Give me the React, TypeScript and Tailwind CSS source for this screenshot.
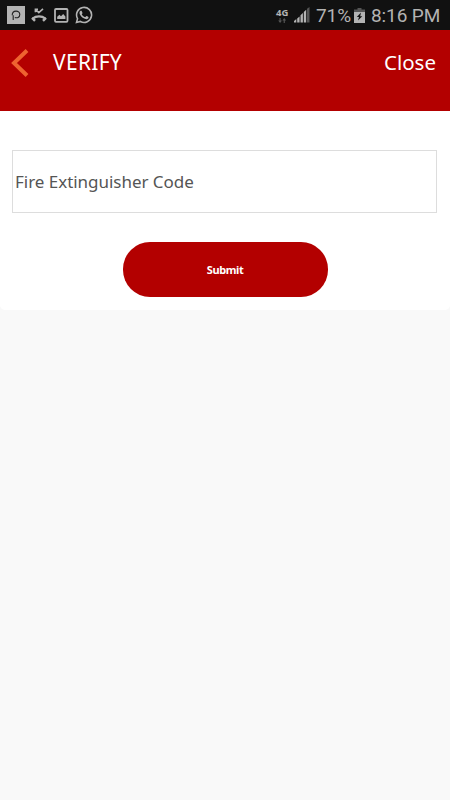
export default function App() {
    return (
        <div className="w-full h-screen bg-[#f9f9f9] overflow-hidden font-['Noto_Sans',sans-serif]">
            <StatusBar />
            <Header />
            <VerifyForm />
        </div>
    )
}

const StatusBar = () => {
    return (
        <div className="h-[30px] bg-[#111111] flex items-center justify-between pl-[7px] pr-[10px] text-[#b3b3b3]">
            <div className="flex items-center gap-[6px]">
                <svg className="w-[18px] h-[18px]" viewBox="0 0 18 18">
                    <rect width="18" height="18" fill="#b3b3b3" />
                    <path d="M6.2 14V9.3M5.2 9.2C5.2 3.8 12.8 4 12.8 8.4C12.8 11.4 10 12.4 7.8 11.4" fill="none" stroke="#222" strokeWidth="1.1" />
                </svg>
                <svg className="w-[16px] h-[16px]" viewBox="0 0 16 16" fill="none" stroke="currentColor">
                    <path d="M4.4 1.5V5.2M3.8 2.2H7M4.4 2.2L7.8 5.6L12 1.8" strokeWidth="1.6" />
                    <path d="M2 11.4C5 8.7 11 8.7 14 11.4" strokeWidth="2.2" />
                    <path d="M1 10.8L4 13.8M15 10.8L12 13.8" strokeWidth="2.4" />
                </svg>
                <svg className="w-[15px] h-[15px] ml-px" viewBox="0 0 15 15">
                    <rect x="1" y="1" width="12.5" height="12.8" rx="1" fill="none" stroke="currentColor" strokeWidth="1.8" />
                    <path d="M3.2 11V8.8L5.4 6.7L7 8.2L9.2 5.9L11.4 8.6V11Z" fill="currentColor" />
                </svg>
                <svg className="w-[18px] h-[18px]" viewBox="0 0 24 24" fill="currentColor">
                    <path d="M17.472 14.382c-.297-.149-1.758-.867-2.03-.967-.273-.099-.471-.148-.67.15-.197.297-.767.966-.94 1.164-.173.199-.347.223-.644.075-.297-.15-1.255-.463-2.39-1.475-.883-.788-1.48-1.761-1.653-2.059-.173-.297-.018-.458.13-.606.134-.133.298-.347.446-.52.149-.174.198-.298.298-.497.099-.198.05-.371-.025-.52-.075-.149-.669-1.612-.916-2.207-.242-.579-.487-.5-.669-.51-.173-.008-.371-.01-.57-.01-.198 0-.52.074-.792.372-.272.297-1.04 1.016-1.04 2.479 0 1.462 1.065 2.875 1.213 3.074.149.198 2.096 3.2 5.077 4.487.709.306 1.262.489 1.694.625.712.227 1.36.195 1.871.118.571-.085 1.758-.719 2.006-1.413.248-.694.248-1.289.173-1.413-.074-.124-.272-.198-.57-.347" />
                    <path d="M2 22L3.4 16.8A10 10 0 1 1 7.2 20.6Z" fill="none" stroke="currentColor" strokeWidth="2.1" />
                </svg>
            </div>
            <div className="flex items-center font-['Roboto',sans-serif] text-[19px] leading-[28px] whitespace-nowrap">
                <div className="w-[13px] h-[18px] mr-[5px] pt-[2px]">
                    <p className="text-[9.5px] leading-[10px] font-['Noto_Sans',sans-serif] font-bold">4G</p>
                    <svg className="w-[10px] h-[5px] ml-[1px]" viewBox="0 0 10 6" fill="#555">
                        <path d="M2 0h1.4v3H5L2.7 6L.4 3H2ZM7 6h1.4V3H10L7.7 0L5.4 3H7Z" />
                    </svg>
                </div>
                <svg className="w-[16px] h-[16px] mr-[6px]" viewBox="0 0 16 16" fill="currentColor">
                    <path d="M0 15.5V14L2.3 12V15.5ZM3.2 15.5V11.5L5.6 9.4V15.5ZM6.5 15.5V8.2L8.9 6V15.5ZM9.8 15.5V5L12.2 2.8V15.5Z" />
                    <path d="M13 15.5V1.8L15.5 0V15.5Z" fill="#555" />
                </svg>
                <span className="w-[35px] pt-[2px] tracking-[-0.1px]">71%</span>
                <svg className="w-[11px] h-[15px] ml-[3px] mr-[6px]" viewBox="0 0 11 15">
                    <path d="M3.5 0H7.5V1.6H11V5H0V1.6H3.5Z" fill="#555" />
                    <path d="M0 4H11V15H0Z" fill="#b3b3b3" />
                    <path d="M7 4.5L2.8 9H5L4 12.4L8.3 8.2H6.2Z" fill="#111" />
                </svg>
                <span className="w-[69px] pt-[2px] tracking-[-0.1px]">8:16 PM</span>
            </div>
        </div>
    )
}

const Header = () => {
    return (
        <header className="h-[81px] bg-[#b30000] flex items-start text-white text-[20.5px] leading-[28px] pt-[18px] pl-[11px] pr-[14px]">
            <svg className="w-[18px] h-[30px]" viewBox="0 0 18 30" fill="none" stroke="#ee6330" strokeWidth="4">
                <path d="M16 2.5L3 15L16 27.5" />
            </svg>
            <h1 className="ml-[24px] text-[21px] tracking-[0.3px]">VERIFY</h1>
            <button className="ml-auto">Close</button>
        </header>
    )
}

const VerifyForm = () => {
    return (
        <section className="h-[199px] bg-white rounded-b-[5px] pt-[39px] pl-[12px] pr-[13px]">
            <input
                className="block w-full h-[63px] border border-[#dddddd] px-[2px] text-[17px] tracking-[-0.03px] text-[#555555] placeholder:text-[#555555] placeholder:opacity-100 outline-none"
                placeholder="Fire Extinguisher Code"
            />
            <button className="block w-[205px] h-[55px] mt-[29px] ml-[110.5px] pt-[1px] rounded-[27px] bg-[#b30000] text-white text-[11px] font-bold tracking-[-0.4px]">Submit</button>
        </section>
    )
}
